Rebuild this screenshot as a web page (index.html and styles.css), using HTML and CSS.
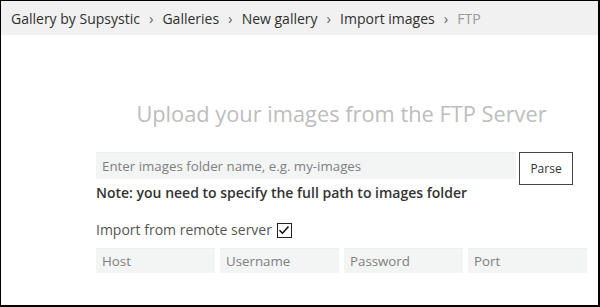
FILE: index.html
```html
<!DOCTYPE html>
<html>
<head>
<meta charset="utf-8">
<link rel="stylesheet" href="styles.css">
</head>
<body>
<div class="frame">
  <nav class="crumbs">
    <span class="crumb">Gallery by Supsystic</span>
    <span class="sep">›</span>
    <span class="crumb">Galleries</span>
    <span class="sep">›</span>
    <span class="crumb">New gallery</span>
    <span class="sep">›</span>
    <span class="crumb">Import images</span>
    <span class="sep">›</span>
    <span class="crumb current">FTP</span>
  </nav>
  <main class="content">
    <h1 class="title">Upload your images from the FTP Server</h1>
    <div class="folder-row">
      <div class="field folder">Enter images folder name, e.g. my-images</div>
      <div class="btn">Parse</div>
    </div>
    <p class="note">Note: you need to specify the full path to images folder</p>
    <div class="remote">
      <span>Import from remote server</span>
      <span class="checkbox">
        <svg width="12" height="10" viewBox="0 0 12 10"><path d="M1.5 5.2 L4.5 8.2 L10.5 1.5" fill="none" stroke="#111" stroke-width="1.6"/></svg>
      </span>
    </div>
    <div class="server-row">
      <div class="field">Host</div>
      <div class="field">Username</div>
      <div class="field">Password</div>
      <div class="field">Port</div>
    </div>
  </main>
</div>
</body>
</html>
```
FILE: styles.css
```css
html, body {
  margin: 0;
  padding: 0;
  background: #fff;
}
.frame {
  width: 600px;
  height: 307px;
  box-sizing: border-box;
  border-style: solid;
  border-color: #000;
  border-width: 1px 2px 2px 1px;
  font-family: "Open Sans", "Noto Sans", sans-serif;
  color: #333;
  overflow: hidden;
}
.crumbs {
  height: 34px;
  background: #f1f1f1;
  display: flex;
  align-items: center;
  padding-left: 10px;
  font-size: 14px;
  color: #2f2f2f;
}
.sep {
  color: #666;
  margin: 0 9px 0 9px;
  font-size: 15px;
}
.current {
  color: #9a9a9a;
}
.content {
  padding: 0 11px 0 95px;
}
.title {
  margin: 64px 0 0 0;
  font-weight: 400;
  font-size: 21.8px;
  line-height: 30px;
  color: #bdbdbd;
  text-align: center;
}
.folder-row {
  display: flex;
  align-items: flex-start;
  gap: 3px;
  margin-top: 23px;
}
.field {
  background: #f3f4f4;
  border-top: 1px solid #eceeee;
  color: #808080;
  font-size: 13.3px;
  height: 26px;
  line-height: 26px;
  padding-left: 6px;
  box-sizing: border-box;
}
.folder {
  width: 420px;
  height: 27px;
}
.btn {
  width: 54px;
  height: 33px;
  box-sizing: border-box;
  border: 1px solid #444;
  font-size: 12px;
  color: #333;
  display: flex;
  align-items: center;
  justify-content: center;
}
.note {
  margin: -2px 0 0 0;
  font-weight: 600;
  font-size: 14px;
  line-height: 20px;
  color: #333;
}
.remote {
  display: flex;
  align-items: center;
  gap: 5px;
  margin-top: 18px;
  font-size: 14px;
  color: #555;
  line-height: 18px;
}
.checkbox {
  width: 13px;
  height: 13px;
  border: 1px solid #222;
  display: flex;
  align-items: center;
  justify-content: center;
}
.server-row {
  display: grid;
  grid-template-columns: repeat(4, 1fr);
  gap: 5px;
  margin-top: 9px;
}
.server-row .field {
  height: 25px;
  line-height: 25px;
}
```
